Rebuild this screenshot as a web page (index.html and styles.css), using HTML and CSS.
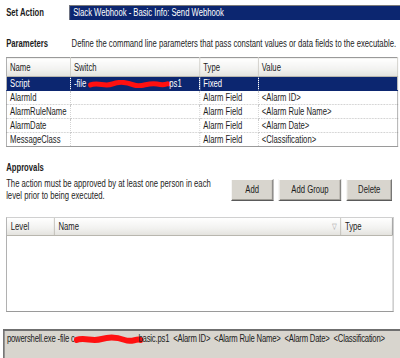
FILE: index.html
```html
<!DOCTYPE html>
<html>
<head>
<meta charset="utf-8">
<link rel="stylesheet" href="styles.css">
</head>
<body>
<div class="page">
  <div class="action-row">
    <div class="label bold">Set Action</div>
    <div class="action-box">Slack Webhook - Basic Info: Send Webhook</div>
  </div>

  <div class="params-row">
    <div class="label bold">Parameters</div>
    <div class="desc">Define the command line parameters that pass constant values or data fields to the executable.</div>
  </div>

  <table class="grid params">
    <colgroup><col class="c-name"><col class="c-switch"><col class="c-type"><col></colgroup>
    <thead>
      <tr><th>Name</th><th>Switch</th><th>Type</th><th>Value</th></tr>
    </thead>
    <tbody>
      <tr class="sel"><td>Script</td><td>-file <svg class="redact" width="108" height="8" viewBox="0 0 108 8"><path d="M3 5 C14 2 22 7 32 4 S50 2 60 5 S78 2 90 4 S102 3 105 4" stroke="#ff1010" stroke-width="5" fill="none" stroke-linecap="round"/></svg>ps1</td><td>Fixed</td><td></td></tr>
      <tr><td>AlarmId</td><td></td><td>Alarm Field</td><td>&lt;Alarm ID&gt;</td></tr>
      <tr><td>AlarmRuleName</td><td></td><td>Alarm Field</td><td>&lt;Alarm Rule Name&gt;</td></tr>
      <tr><td>AlarmDate</td><td></td><td>Alarm Field</td><td>&lt;Alarm Date&gt;</td></tr>
      <tr><td>MessageClass</td><td></td><td>Alarm Field</td><td>&lt;Classification&gt;</td></tr>
    </tbody>
  </table>

  <div class="approvals-title bold">Approvals</div>
  <div class="approvals-row">
    <div class="approvals-desc">The action must be approved by at least one person in each<br>level prior to being executed.</div>
    <div class="buttons">
      <div class="btn btn-add">Add</div>
      <div class="btn btn-group">Add Group</div>
      <div class="btn btn-del">Delete</div>
    </div>
  </div>

  <div class="list">
    <div class="list-head">
      <div class="lh lh-level">Level</div>
      <div class="lh lh-name">Name<span class="sort">&#9661;</span></div>
      <div class="lh lh-type">Type</div>
    </div>
  </div>

  <div class="cmd-bar">
    <span>powershell.exe -file c<svg class="redact2" width="90" height="10" viewBox="0 0 90 10"><path d="M3 6 C14 3 24 8 36 5 S56 3 66 6 S80 4 87 6" stroke="#ff1010" stroke-width="6" fill="none" stroke-linecap="round"/></svg>basic.ps1&nbsp; &lt;Alarm ID&gt;&nbsp; &lt;Alarm Rule Name&gt;&nbsp; &lt;Alarm Date&gt;&nbsp; &lt;Classification&gt;</span>
  </div>
</div>
</body>
</html>
```

FILE: styles.css
```css
html, body {
  margin: 0;
  padding: 0;
  background: #ffffff;
}
body {
  width: 400px;
  height: 358px;
  overflow: hidden;
  font-family: "Liberation Sans", Arial, sans-serif;
  font-size: 10px;
  color: #1c1c1c;
}
/* the source capture is horizontally condensed; lay out wide and condense */
.page {
  display: flex;
  flex-direction: column;
  width: 520px;
  height: 358px;
  transform: scaleX(0.77);
  transform-origin: 0 0;
}
.bold { font-weight: bold; }

.action-row {
  display: flex;
  align-items: center;
  padding: 5px 0 0 8px;
  height: 15px;
}
.label {
  width: 82px;
  flex: none;
}
.action-box {
  flex: 1;
  height: 14px;
  line-height: 14px;
  background: #0c2670;
  color: #ffffff;
  border-top: 1px solid #7a7a7a;
  border-left: 1px solid #7a7a7a;
  padding-left: 4px;
}

.params-row {
  display: flex;
  align-items: center;
  padding: 17px 0 0 8px;
  height: 12px;
}
.desc { white-space: nowrap; padding-left: 3px; }

.grid {
  border-collapse: collapse;
  table-layout: fixed;
}
.params {
  margin: 8px 0 0 8px;
  width: 509px;
  border: 1px solid #9a9a9a;
}
.c-name { width: 83px; }
.c-switch { width: 168px; }
.c-type { width: 76px; }
.params th {
  height: 18px;
  padding: 0 0 0 4px;
  text-align: left;
  font-weight: normal;
  background: linear-gradient(#ffffff, #f2f2f0 60%, #e3e2de);
  border-right: 1px solid #c9c7c0;
  border-bottom: 1px solid #b8b6ae;
  white-space: nowrap;
}
.params td {
  height: 13px;
  padding: 0 0 0 4px;
  border-right: 1px dotted #c8c8c8;
  border-bottom: 1px dotted #c8c8c8;
  white-space: nowrap;
  overflow: hidden;
}
.params tr.sel td {
  background: #0c2670;
  color: #ffffff;
  border-bottom: 1px solid #0c2670;
  border-right-color: #0c2670;
}
.redact { vertical-align: middle; margin: 0 -2px 0 -1px; }
.redact2 { vertical-align: middle; margin: 0 -6px 0 -1px; }

.approvals-title {
  padding: 15px 0 0 8px;
  height: 12px;
}
.approvals-row {
  display: flex;
  align-items: flex-start;
  padding: 4px 0 0 8px;
}
.approvals-desc {
  width: 292px;
  line-height: 12px;
  white-space: nowrap;
}
.buttons {
  display: flex;
  gap: 7px;
  margin-top: 1px;
}
.btn {
  height: 20px;
  line-height: 20px;
  text-align: center;
  background: #d8d5ce;
  border-top: 1px solid #ffffff;
  border-left: 1px solid #ffffff;
  border-right: 1px solid #5a5a5a;
  border-bottom: 1px solid #5a5a5a;
  box-shadow: inset -1px -1px 0 #a09d96;
}
.btn-add { width: 53px; }
.btn-group { width: 79px; }
.btn-del { width: 57px; }

.list {
  margin: 15px 0 0 8px;
  width: 501px;
  height: 93px;
  border: 1px solid #9a9a9a;
  border-top-color: #d0d0d0;
}
.list-head {
  display: flex;
  height: 17px;
  background: linear-gradient(#ffffff, #f2f2f0 60%, #e4e3df);
  border-bottom: 1px solid #b8b6ae;
}
.lh {
  line-height: 17px;
  padding-left: 5px;
  border-right: 1px solid #b8b6ae;
  box-sizing: border-box;
}
.lh-level { width: 62px; }
.lh-name {
  width: 372px;
  display: flex;
  justify-content: space-between;
  padding-right: 5px;
}
.sort { color: #a0a0a0; font-size: 8px; }
.lh-type { flex: 1; border-right: 1px solid #8a8a8a; }

.cmd-bar {
  margin: 17px 0 0 4px;
  flex: 1;
  background: #d8d5ce;
  border-top: 2px solid #6f6f6f;
  border-left: 2px solid #6f6f6f;
  padding: 1px 0 0 3px;
  white-space: nowrap;
  line-height: 14px;
  letter-spacing: -0.25px;
}
```
